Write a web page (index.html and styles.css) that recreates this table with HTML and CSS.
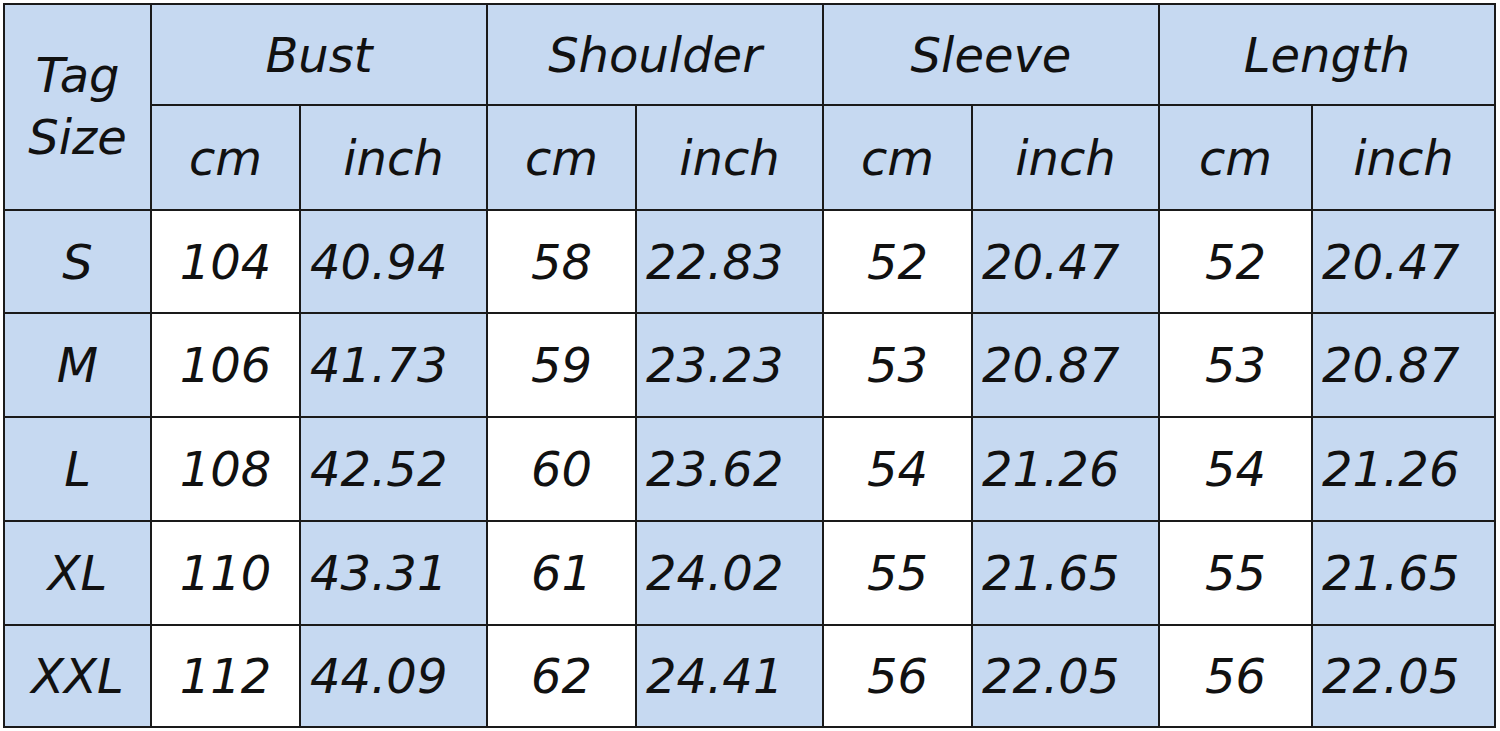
FILE: index.html
```html
<!DOCTYPE html>
<html>
<head>
<meta charset="utf-8">
<link rel="stylesheet" href="styles.css">
</head>
<body>
<table class="size-table">
  <colgroup>
    <col class="c-tag">
    <col class="c-cm">
    <col class="c-in">
    <col class="c-cm">
    <col class="c-in">
    <col class="c-cm">
    <col class="c-in">
    <col class="c-cm2">
    <col class="c-in2">
  </colgroup>
  <thead>
    <tr class="r-h1">
      <th rowspan="2" class="tag">Tag<br>Size</th>
      <th colspan="2">Bust</th>
      <th colspan="2">Shoulder</th>
      <th colspan="2">Sleeve</th>
      <th colspan="2">Length</th>
    </tr>
    <tr class="r-h2">
      <th>cm</th><th>inch</th>
      <th>cm</th><th>inch</th>
      <th>cm</th><th>inch</th>
      <th>cm</th><th>inch</th>
    </tr>
  </thead>
  <tbody>
    <tr class="r-d1">
      <td class="tag">S</td>
      <td class="cm">104</td><td class="in">40.94</td>
      <td class="cm">58</td><td class="in">22.83</td>
      <td class="cm">52</td><td class="in">20.47</td>
      <td class="cm">52</td><td class="in">20.47</td>
    </tr>
    <tr class="r-d">
      <td class="tag">M</td>
      <td class="cm">106</td><td class="in">41.73</td>
      <td class="cm">59</td><td class="in">23.23</td>
      <td class="cm">53</td><td class="in">20.87</td>
      <td class="cm">53</td><td class="in">20.87</td>
    </tr>
    <tr class="r-d">
      <td class="tag">L</td>
      <td class="cm">108</td><td class="in">42.52</td>
      <td class="cm">60</td><td class="in">23.62</td>
      <td class="cm">54</td><td class="in">21.26</td>
      <td class="cm">54</td><td class="in">21.26</td>
    </tr>
    <tr class="r-d">
      <td class="tag">XL</td>
      <td class="cm">110</td><td class="in">43.31</td>
      <td class="cm">61</td><td class="in">24.02</td>
      <td class="cm">55</td><td class="in">21.65</td>
      <td class="cm">55</td><td class="in">21.65</td>
    </tr>
    <tr class="r-last">
      <td class="tag">XXL</td>
      <td class="cm">112</td><td class="in">44.09</td>
      <td class="cm">62</td><td class="in">24.41</td>
      <td class="cm">56</td><td class="in">22.05</td>
      <td class="cm">56</td><td class="in">22.05</td>
    </tr>
  </tbody>
</table>
</body>
</html>
```
FILE: styles.css
```css
html, body {
  margin: 0;
  padding: 0;
  background: #ffffff;
}

body {
  padding: 3px 0 0 3px;
}

.size-table {
  border-collapse: collapse;
  table-layout: fixed;
  width: 1491px;
  font-family: "DejaVu Sans", Verdana, sans-serif;
  font-style: italic;
  font-size: 48px;
  color: #111111;
}

.c-tag { width: 147px; }
.c-cm { width: 149px; }
.c-in { width: 187px; }
.c-cm2 { width: 153px; }
.c-in2 { width: 183px; }

.size-table th,
.size-table td {
  border: 2px solid #1a1a1a;
  background: #c6d9f1;
  padding: 0;
  text-align: center;
  vertical-align: middle;
  font-weight: normal;
  white-space: nowrap;
  overflow: hidden;
}

.size-table th.tag {
  line-height: 62px;
  padding-bottom: 2px;
}

.size-table td.cm {
  background: #ffffff;
}

.size-table td.in {
  text-align: left;
  padding-left: 9px;
}

.r-h1 { height: 101px; }
.r-h2 { height: 105px; }
.r-d1 { height: 103px; }
.r-d { height: 104px; }
.r-last { height: 102px; }
```
